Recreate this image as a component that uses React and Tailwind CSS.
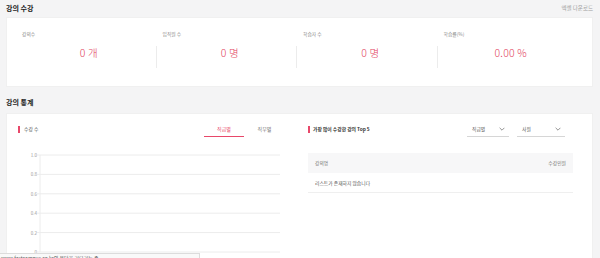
import React from "react";

const PINK = "bg-[#e8486a]";

function Stat({ label, value, divider }) {
  return (
    <div className="flex-1 flex flex-col">
      <div className="pl-[7px] h-[6px] leading-[6px] text-[4.8px] text-[#8a8a8a]">{label}</div>
      <div className={`mt-[9px] h-[22px] flex justify-center pl-[7px] ${divider ? "border-l border-[#ececec]" : ""}`}>
        <span className="text-[10.5px] leading-[14px] font-light text-[#e23f5e] tracking-[0.2px]">{value}</span>
      </div>
    </div>
  );
}

function Chevron() {
  return (
    <svg width="6" height="4" viewBox="0 0 6 4" fill="none">
      <path d="M0.6 0.8 L3 3.2 L5.4 0.8" stroke="#666" strokeWidth="0.7" />
    </svg>
  );
}

export default function App() {
  const ys = [3, 22.4, 41.8, 61.2, 80.6, 100];
  return (
    <div className="w-[600px] h-[258px] overflow-hidden bg-[#f4f4f5] relative pl-[6px] pr-[7px] font-['Noto_Sans_CJK_KR','Noto_Sans',sans-serif]">
      <div className="h-[17px] flex items-center justify-between">
        <span className="text-[7px] font-bold text-[#222] leading-none">강의 수강</span>
        <span className="text-[5.5px] text-[#a0a0a0] leading-none">엑셀 다운로드</span>
      </div>
      <div className="h-[70px] bg-white border border-[#f0f0f0] flex pl-[8px] pr-[15px] pt-[13px]">
        <Stat label="강의수" value="0 개" />
        <Stat label="임직원 수" value="0 명" divider />
        <Stat label="학습자 수" value="0 명" divider />
        <Stat label="학습률(%)" value="0.00 %" divider />
      </div>
      <div className="h-[26px] pt-[4px] flex items-center">
        <span className="text-[7px] font-bold text-[#222] leading-none">강의 통계</span>
      </div>
      <div className="h-[160px] bg-white border border-[#f0f0f0] grid grid-cols-[267px_265px] gap-x-[23px] pl-[11px] pr-[19px] pt-[7px]">
        <div className="flex flex-col">
          <div className="h-[16px] flex items-center justify-between">
            <div className="flex items-center">
              <div className={`w-[2px] h-[7px] ${PINK}`} />
              <span className="ml-[4px] text-[4.8px] text-[#555] leading-none">수강 수</span>
            </div>
            <div className="flex h-[16px]">
              <div className="w-[40px] flex items-center justify-center border-b border-[#e8486a] text-[5px] text-[#e8486a]">직급별</div>
              <div className="w-[41px] flex items-center justify-center text-[5px] text-[#777]">직무별</div>
            </div>
          </div>
          <div className="mt-[15px] h-[103px] flex">
            <div className="w-[19px] flex flex-col justify-between items-end text-[4.5px] leading-[6px] text-[#999]">
              <span>1.0</span>
              <span>0.8</span>
              <span>0.6</span>
              <span>0.4</span>
              <span>0.2</span>
              <span>0</span>
            </div>
            <svg width="248" height="103" viewBox="0 0 248 103">
              {ys.map((y) => (
                <line key={y} x1="0" y1={y} x2="243" y2={y} stroke="#ececec" strokeWidth="1" />
              ))}
              <line x1="3" y1="3" x2="3" y2="100" stroke="#ececec" strokeWidth="1" />
            </svg>
          </div>
        </div>
        <div className="flex flex-col">
          <div className="h-[16px] flex items-center justify-between pr-[8px]">
            <div className="flex items-center">
              <div className={`w-[2px] h-[7px] ${PINK}`} />
              <span className="ml-[3px] text-[4.8px] font-bold text-[#333] leading-none">가장 많이 수강한 강의 Top 5</span>
            </div>
            <div className="flex gap-[8px] h-[16px]">
              <div className="w-[42px] flex items-center justify-between border-b border-[#d6d6d6] pl-[5px] pr-[4px]">
                <span className="text-[4.8px] text-[#555]">직급별</span>
                <Chevron />
              </div>
              <div className="w-[48px] flex items-center justify-between border-b border-[#d6d6d6] pl-[5px] pr-[4px]">
                <span className="text-[4.8px] text-[#555]">사원</span>
                <Chevron />
              </div>
            </div>
          </div>
          <div className="mt-[16px] h-[20px] bg-[#f7f7f8] flex items-center justify-between px-[7px] text-[4.8px] text-[#777]">
            <span>강의명</span>
            <span>수강인원</span>
          </div>
          <div className="h-[20px] border-b border-[#efefef] flex items-center px-[7px] text-[4.8px] text-[#555]">
            리스트가 존재하지 않습니다
          </div>
        </div>
      </div>
      <div className="absolute left-0 bottom-0 w-[200px] h-[5px] bg-[#f9f9f9] border-t border-r border-[#dcdcdc] overflow-hidden">
        <div className="pl-[1px] text-[5px] leading-[7px] text-[#555] whitespace-nowrap">www.fastcampus.co.kr의 응답을 기다리는 중...</div>
      </div>
    </div>
  );
}
